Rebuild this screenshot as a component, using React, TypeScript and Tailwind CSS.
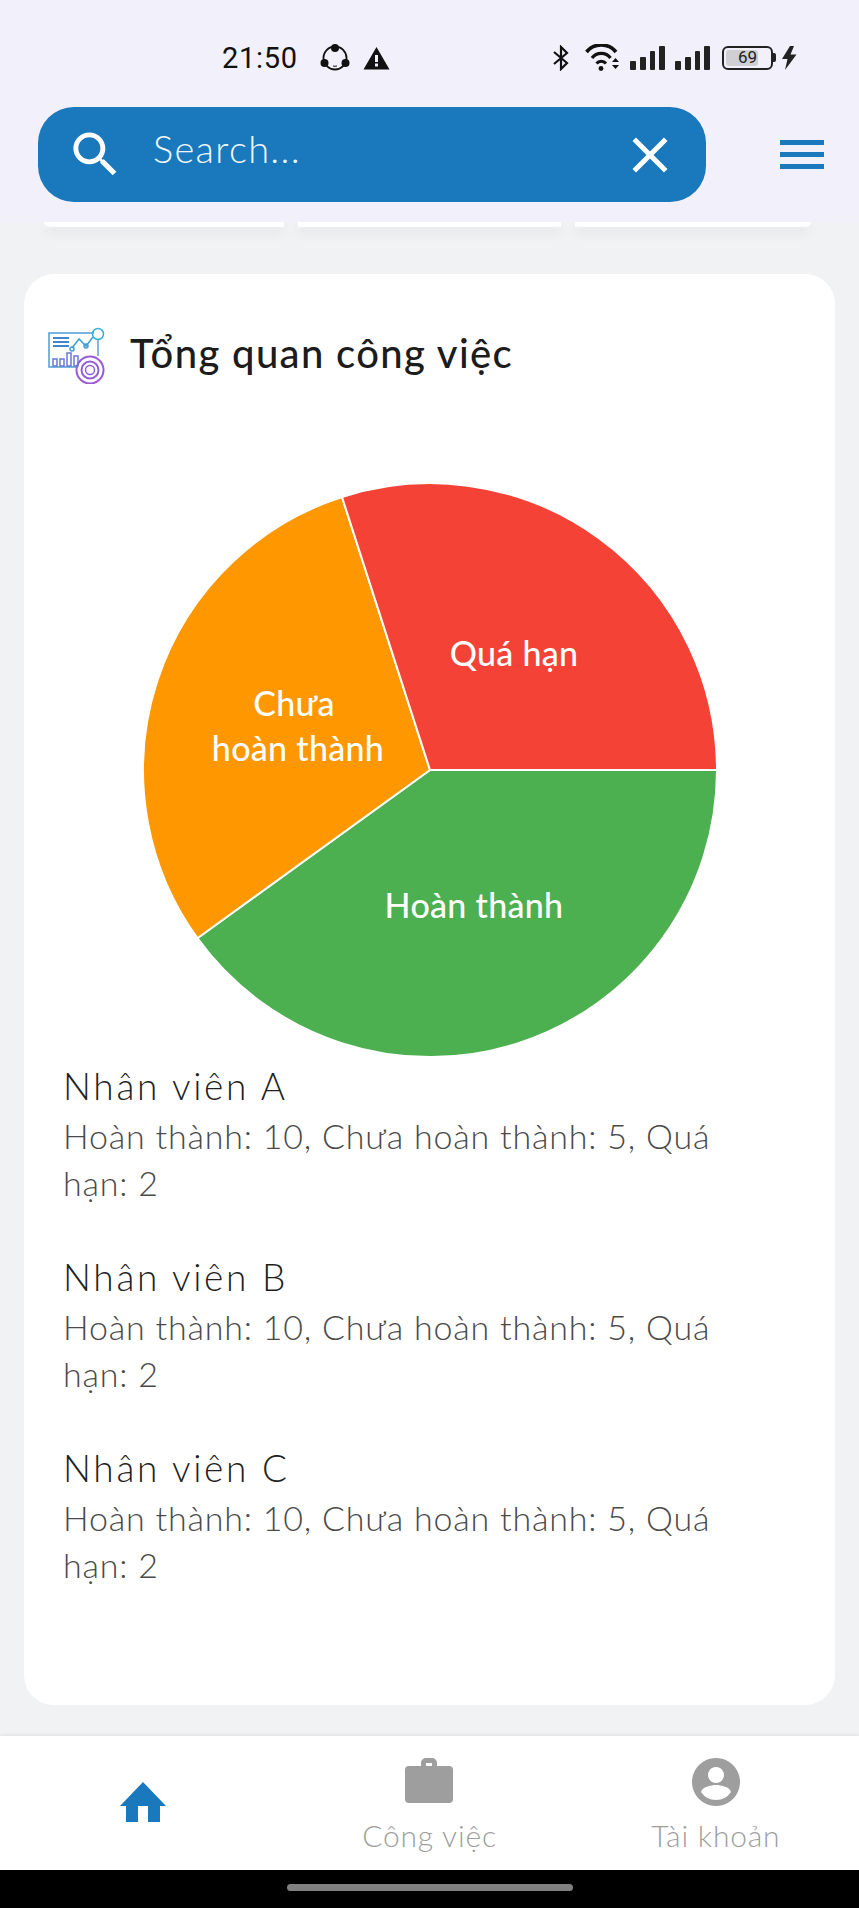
import React from 'react';

const FONT = '[font-family:Lato,"Noto_Sans",sans-serif]';

const employees = ['Nhân viên A', 'Nhân viên B', 'Nhân viên C'];

const StatusBar: React.FC = () => (
  <div className="h-[107px] relative">
    <div className="flex items-center pt-[43px] pl-[222px] pr-[62px] h-[72px] text-[#111]">
      <span className="text-[29px] leading-[30px] tracking-[0.7px] [font-family:Roboto,sans-serif]">21:50</span>
      <svg className="ml-[22px]" width="30" height="30" viewBox="0 0 30 30">
        <circle cx="15" cy="15" r="11.5" fill="none" stroke="#111" strokeWidth="1.8" />
        <path d="M13 23 A8 8 0 0 0 17 23" fill="none" stroke="#111" strokeWidth="1" />
        <circle cx="15" cy="5" r="4" fill="#111" />
        <circle cx="4.5" cy="20" r="4" fill="#111" />
        <circle cx="25.5" cy="20" r="4" fill="#111" />
      </svg>
      <svg className="ml-[13px]" width="27" height="24" viewBox="0 0 27 24">
        <path d="M13.5 1 L26.5 23.5 H0.5 Z" fill="#111" />
        <rect x="12" y="9" width="3" height="7" fill="#f2f0fa" />
        <rect x="12" y="17.5" width="3" height="3" fill="#f2f0fa" />
      </svg>
      <div className="flex-1" />
      <svg width="18" height="26" viewBox="0 0 18 26" className="mr-[15px]">
        <path d="M2 7 L15 18 L9 24 V2 L15 8 L2 19" fill="none" stroke="#111" strokeWidth="2.2" />
      </svg>
      <svg width="36" height="27" viewBox="0 0 36 27" className="mr-[9px]">
        <path d="M1.5 8 A19 19 0 0 1 31 8" fill="none" stroke="#111" strokeWidth="3.6" />
        <path d="M7 14 A11.5 11.5 0 0 1 25.5 14" fill="none" stroke="#111" strokeWidth="3.2" />
        <path d="M11.5 19.5 A6 6 0 0 1 21 19.5" fill="none" stroke="#111" strokeWidth="3" />
        <circle cx="16" cy="24.5" r="2.4" fill="#111" />
        <path d="M27 18 L30.5 14 L34 18 Z M27 21 H34 L30.5 25 Z" fill="#111" />
      </svg>
      {[0, 1].map((i) => (
        <div key={i} className="flex items-end gap-[4px] h-[24px] mr-[10px] w-[35px]">
          <div className="w-[6px] h-[9px] bg-[#222] rounded-[1px]" />
          <div className="w-[6px] h-[13px] bg-[#222] rounded-[1px]" />
          <div className="w-[6px] h-[19px] bg-[#222] rounded-[1px]" />
          <div className="w-[6px] h-[24px] bg-[#222] rounded-[1px]" />
        </div>
      ))}
      <div className="ml-[2px] w-[51px] h-[24px] rounded-[6px] border-2 border-[#222] p-[2px] relative">
        <div className="h-full w-[32px] bg-[#cfcfd4] rounded-[3px]" />
        <span className="absolute inset-0 flex items-center justify-center text-[17px] leading-none text-[#222] [font-family:Roboto,sans-serif]">69</span>
      </div>
      <div className="w-[3px] h-[9px] bg-[#222] rounded-r-[2px] mr-[5px]" />
      <svg width="16" height="24" viewBox="0 0 16 24">
        <path d="M9 0 L1 13 H6.5 L4 24 L15.5 8.5 H9.5 L13 0 Z" fill="#222" />
      </svg>
    </div>
  </div>
);

const SearchRow: React.FC = () => (
  <div className="flex items-center pl-[38px] pr-[35px]">
    <div className="w-[668px] h-[95px] rounded-[36px] bg-[#1a78bd] flex items-center pl-[28px] pr-[26px] text-white">
      <svg width="59" height="59" viewBox="0 0 24 24" fill="currentColor" className="shrink-0">
        <path d="M15.5 14h-.79l-.28-.27C15.41 12.59 16 11.11 16 9.5 16 5.91 13.09 3 9.5 3S3 5.91 3 9.5 5.91 16 9.5 16c1.61 0 3.09-.59 4.23-1.57l.27.28v.79l5 4.99L20.49 19l-4.99-5zm-6 0C7.01 14 5 11.99 5 9.5S7.01 5 9.5 5 14 7.01 14 9.5 11.99 14 9.5 14z" />
      </svg>
      <span className="ml-[28px] text-[38px] leading-none font-light tracking-[1.3px] text-[#f0f6fb] -translate-y-[7px]">Search...</span>
      <div className="flex-1" />
      <svg width="60" height="60" viewBox="0 0 24 24" fill="currentColor" className="shrink-0">
        <path d="M19 6.41L17.59 5 12 10.59 6.41 5 5 6.41 10.59 12 5 17.59 6.41 19 12 13.41 17.59 19 19 17.59 13.41 12z" />
      </svg>
    </div>
    <div className="ml-[74px] w-[44px] flex flex-col gap-[7px]">
      <div className="h-[5px] bg-[#1a78bd]" />
      <div className="h-[5px] bg-[#1a78bd]" />
      <div className="h-[5px] bg-[#1a78bd]" />
    </div>
  </div>
);

const OverviewIcon: React.FC = () => (
  <svg width="58" height="58" viewBox="0 0 58 58" fill="none" strokeWidth="1.5">
    <path d="M46 7 H1 V41 H30" stroke="#4a9fd8" />
    <path d="M50 14 V30" stroke="#5aa0d8" />
    <circle cx="50" cy="8" r="5.5" stroke="#35b0d6" />
    <circle cx="42" cy="44" r="13.5" stroke="#9b5ad8" strokeWidth="2" />
    <circle cx="42" cy="44" r="8.5" stroke="#8f5fd8" strokeWidth="2" />
    <circle cx="42" cy="44" r="4.5" stroke="#8f5fd8" />
    <path d="M5 12 H21 M5 16 H21 M5 20 H21" stroke="#3f86cf" strokeWidth="1.8" />
    <path d="M24 22 L31 13 L38 20 L45 11" stroke="#3f9fd6" />
    <circle cx="24" cy="23" r="2" stroke="#3f9fd6" />
    <circle cx="38" cy="20" r="2" stroke="#3f9fd6" />
    <path d="M5 33 H9 V40 H5 Z M12 33 H16 V40 H12 Z M19 27 H23 V40 H19 Z M26 30 H30 V40 H26 Z" stroke="#6a78d8" />
  </svg>
);

const PieChart: React.FC = () => (
  <svg width="580" height="580" viewBox="-290 -290 580 580" className="mx-auto block">
    <path d="M0 0 L287 0 A287 287 0 0 1 -232.6 168.2 Z" fill="#4caf50" stroke="#fff" strokeWidth="2" />
    <path d="M0 0 L-232.6 168.2 A287 287 0 0 1 -88 -273 Z" fill="#ff9800" stroke="#fff" strokeWidth="2" />
    <path d="M0 0 L-88 -273 A287 287 0 0 1 287 0 Z" fill="#f44336" stroke="#fff" strokeWidth="2" />
    <g fill="#fff" fontSize="34" fontWeight="500" textAnchor="middle" letterSpacing="0.3">
      <text x="84" y="-104">Quá hạn</text>
      <text x="-136" y="-54">Chưa</text>
      <text x="-132" y="-9">hoàn thành</text>
      <text x="44" y="148">Hoàn thành</text>
    </g>
  </svg>
);

export default function App() {
  return (
    <div className={`w-[859px] h-[1908px] flex flex-col overflow-hidden bg-[#f1f2f4] ${FONT}`}>
      <div className="h-[222px] bg-[#f2f0fa] shrink-0 relative z-10">
        <StatusBar />
        <SearchRow />
      </div>

      <div className="flex gap-[14px] pl-[44px] pr-[48px] shrink-0">
        <div className="w-[240px] h-[5px] bg-white rounded-bl-[14px] shadow-[0_6px_12px_rgba(0,0,0,0.08)]" />
        <div className="w-[263px] h-[5px] bg-white shadow-[0_6px_12px_rgba(0,0,0,0.08)]" />
        <div className="flex-1 h-[5px] bg-white rounded-br-[14px] shadow-[0_6px_12px_rgba(0,0,0,0.08)]" />
      </div>

      <div className="flex-1 px-[24px] pt-[47px]">
        <div className="h-[1431px] bg-white rounded-[30px] pl-[24px] pt-[52px]">
          <div className="flex items-center gap-[24px] h-[58px]">
            <OverviewIcon />
            <h2 className="text-[40px] leading-none font-medium tracking-[1.35px] text-[#1c1c1c] -translate-y-[2px]">Tổng quan công việc</h2>
          </div>
          <div className="-ml-[24px] mt-[96px]">
            <PieChart />
          </div>
          <div className="pl-[15px] -mt-[1px] flex flex-col gap-[44px]">
            {employees.map((name) => (
              <div key={name}>
                <div className="text-[37px] leading-[53px] font-light tracking-[2.7px] text-[#1f1f1f]">{name}</div>
                <p className="w-[680px] text-[34px] leading-[47px] font-light tracking-[0.8px] text-[#4a4a4a]">
                  Hoàn thành: 10, Chưa hoàn thành: 5, Quá hạn: 2
                </p>
              </div>
            ))}
          </div>
        </div>
      </div>

      <nav className="h-[134px] bg-white shrink-0 grid grid-cols-3 shadow-[0_-1px_3px_rgba(0,0,0,0.08)] relative">
        <div className="flex justify-center pt-[46px]">
          <svg width="46" height="40" viewBox="0 0 46 40">
            <path d="M23 0 L46 24 H40 V40 H28 V24 H18 V40 H6 V24 H0 Z" fill="#1a78bd" />
          </svg>
        </div>
        <div className="flex flex-col items-center pt-[22px]">
          <svg width="48" height="46" viewBox="0 0 48 46">
            <path d="M16 8 V5 a5 5 0 0 1 5 -5 h6 a5 5 0 0 1 5 5 V8 h12 a4 4 0 0 1 4 4 V41 a4 4 0 0 1 -4 4 H4 a4 4 0 0 1 -4 -4 V12 a4 4 0 0 1 4 -4 Z M21 8 h6 V5 h-6 Z" fillRule="evenodd" fill="#9e9e9e" />
          </svg>
          <span className="mt-[14px] text-[30px] leading-[34px] font-light tracking-[0.8px] text-[#9e9e9e]">Công việc</span>
        </div>
        <div className="flex flex-col items-center pt-[22px]">
          <svg width="48" height="48" viewBox="0 0 48 48">
            <path fillRule="evenodd" fill="#9e9e9e" d="M24 0 a24 24 0 1 0 0.01 0 Z M24 9 a8 8 0 1 1 -0.01 0 Z M24 42 a18 18 0 0 1 -15 -8 c1 -5 10 -7 15 -7 s14 2 15 7 a18 18 0 0 1 -15 8 Z" />
          </svg>
          <span className="mt-[12px] text-[30px] leading-[34px] font-light tracking-[0.8px] text-[#9e9e9e]">Tài khoản</span>
        </div>
      </nav>

      <div className="h-[38px] bg-black shrink-0 flex justify-center pt-[14px]">
        <div className="w-[286px] h-[7px] rounded-full bg-[#808080]" />
      </div>
    </div>
  );
}
